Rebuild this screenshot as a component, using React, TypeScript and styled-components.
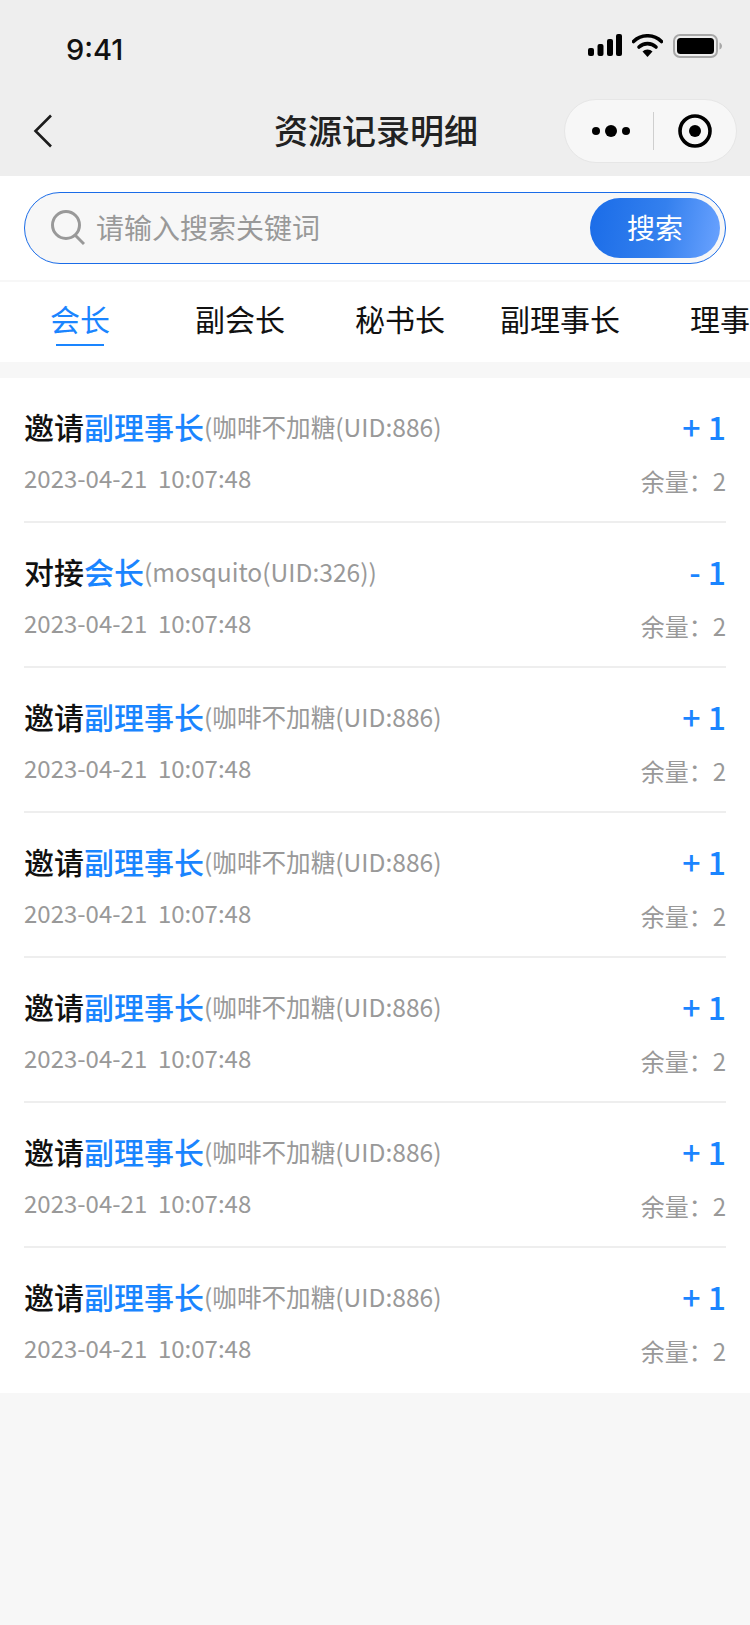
import React from "react";
import styled, { createGlobalStyle } from "styled-components";

const GlobalStyle = createGlobalStyle`
  html, body {
    margin: 0;
    padding: 0;
    background: #f7f7f7;
    font-family: "Noto Sans CJK SC", "Noto Sans", sans-serif;
  }
  * {
    box-sizing: border-box;
  }
`;

const Page = styled.div`
  width: 750px;
  height: 1625px;
  overflow: hidden;
  background: #f7f7f7;
`;

const Header = styled.header`
  height: 176px;
  background: #eeeeee;
`;

const StatusBar = styled.div`
  height: 88px;
  display: flex;
  justify-content: space-between;
  padding: 28px 28px 0 66px;
`;

const Time = styled.span`
  font-family: Inter, "Liberation Sans", sans-serif;
  font-size: 29px;
  line-height: 44px;
  font-weight: 500;
  color: #111;
`;

const StatusIcons = styled.div`
  display: flex;
  align-items: flex-start;
  gap: 10px;
  padding-top: 6px;
`;

const NavBar = styled.div`
  height: 88px;
  display: grid;
  grid-template-columns: 1fr auto 1fr;
  align-items: center;
  padding: 0 13px;
`;

const BackIcon = styled.svg`
  display: block;
  margin: -2px 0 0 20px;
`;

const Title = styled.h1`
  margin: 0 0 0 2px;
  font-size: 34px;
  line-height: 44px;
  font-weight: 500;
  color: #222;
  transform: translateY(-2px);
`;

const Capsule = styled.div`
  justify-self: end;
  width: 173px;
  height: 64px;
  margin-top: -3px;
  border-radius: 32px;
  border: 1px solid #e6e6e6;
  background: #f7f7f7;
  display: flex;
  align-items: center;
`;

const CapsuleSlot = styled.div<{ $nudge?: number }>`
  flex: 1;
  display: flex;
  align-items: center;
  justify-content: center;
  padding-left: ${(p) => p.$nudge ?? 0}px;
`;

const CapsuleLine = styled.div`
  width: 1px;
  height: 38px;
  background: #cfcfcf;
`;

const SearchSection = styled.div`
  height: 106px;
  padding: 16px 24px 0;
  background: #fff;
  border-bottom: 2px solid #f7f7f7;
`;

const SearchBox = styled.div`
  height: 72px;
  display: flex;
  align-items: center;
  padding: 0 5px 0 26px;
  border: 1px solid #1a6ce8;
  border-radius: 36px;
  background: #f7f7f7;
`;

const SearchGlass = styled.svg`
  flex: none;
`;

const Placeholder = styled.span`
  flex: 1;
  margin: -2px 0 0 11px;
  font-size: 28px;
  line-height: 40px;
  color: #999;
`;

const SearchButton = styled.button`
  width: 130px;
  height: 60px;
  padding: 0 0 2px;
  border: none;
  border-radius: 30px;
  background: linear-gradient(100deg, #1a6ce8 0%, #3480ee 55%, #6ba3ff 100%);
  color: #fff;
  font-family: inherit;
  font-size: 28px;
  line-height: 40px;
`;

const Tabs = styled.nav`
  height: 80px;
  display: flex;
  background: #fff;
`;

const Tab = styled.div<{ $active?: boolean }>`
  flex: none;
  width: 160px;
  height: 80px;
  display: flex;
  flex-direction: column;
  align-items: center;
  padding-top: 16px;
  font-size: 30px;
  line-height: 40px;
  color: ${(p) => (p.$active ? "#1a85ff" : "#111")};

  &::after {
    content: "";
    width: 48px;
    height: 2px;
    margin-top: 6px;
    background: ${(p) => (p.$active ? "#1a85ff" : "transparent")};
  }
`;

const List = styled.ul`
  list-style: none;
  margin: 16px 0 0;
  padding: 0 24px;
  background: #fff;
`;

const Row = styled.li`
  height: 145px;
  display: flex;
  justify-content: space-between;
  padding-top: 26px;
  border-bottom: 2px solid #eeeeee;

  &:last-child {
    border-bottom: none;
  }
`;

const RowMain = styled.div`
  display: flex;
  flex-direction: column;
  gap: 10px;
`;

const RowSide = styled.div`
  display: flex;
  flex-direction: column;
  align-items: flex-end;
  gap: 13px;
`;

const RowTitle = styled.div`
  display: flex;
  align-items: center;
  height: 44px;
  font-size: 30px;
  line-height: 44px;
  font-weight: 500;
  color: #111;
`;

const Role = styled.span`
  color: #1a85ff;
`;

const Who = styled.span`
  font-size: 24.6px;
  font-weight: 400;
  color: #999;
`;

const Muted = styled.span`
  font-size: 24px;
  line-height: 40px;
  color: #999;
  white-space: pre;
`;

const Amount = styled.span`
  height: 44px;
  font-size: 32px;
  line-height: 44px;
  font-weight: 500;
  color: #1a85ff;
  white-space: pre;
`;

type Record = {
  action: string;
  role: string;
  who: string;
  amount: string;
};

const invite: Record = {
  action: "邀请",
  role: "副理事长",
  who: "(咖啡不加糖(UID:886)",
  amount: "+ 1",
};

const records: Record[] = [
  invite,
  { action: "对接", role: "会长", who: "(mosquito(UID:326))", amount: "- 1" },
  invite,
  invite,
  invite,
  invite,
  invite,
];

const tabs = ["会长", "副会长", "秘书长", "副理事长", "理事"];

const App = () => {
  return (
    <Page>
      <GlobalStyle />
      <Header>
        <StatusBar>
          <Time>9:41</Time>
          <StatusIcons>
            <svg width="34" height="22" viewBox="0 0 34 22">
              <rect x="0" y="14" width="6" height="8" rx="2" fill="#000" />
              <rect x="9.500" y="10" width="6" height="12" rx="2" fill="#000" />
              <rect x="19" y="5" width="6" height="17" rx="2" fill="#000" />
              <rect x="28" y="0" width="6" height="22" rx="2" fill="#000" />
            </svg>
            <svg width="31" height="23" viewBox="0 0 31 23">
              <path d="M1.500 7.500a20 20 0 0 1 28 0" fill="none" stroke="#000" strokeWidth="3.600" strokeLinecap="round" />
              <path d="M7 13a12.500 12.500 0 0 1 17 0" fill="none" stroke="#000" strokeWidth="3.600" strokeLinecap="round" />
              <path d="M10.500 17.500a7 7 0 0 1 10 0L15.500 23z" fill="#000" />
            </svg>
            <svg width="49" height="24" viewBox="0 0 49 24">
              <rect x="1" y="1" width="43" height="22" rx="6" fill="none" stroke="#a8a8a8" strokeWidth="2" />
              <rect x="4" y="4" width="37" height="16" rx="3.500" fill="#000" />
              <path d="M46.500 8.500c1.500.5 2.500 2 2.500 3.500s-1 3-2.500 3.500z" fill="#a8a8a8" />
            </svg>
          </StatusIcons>
        </StatusBar>
        <NavBar>
          <BackIcon width="20" height="34" viewBox="0 0 20 34">
            <path d="M18 1.500 2.500 17 18 32.500" fill="none" stroke="#1c1c1c" strokeWidth="2.600" />
          </BackIcon>
          <Title>资源记录明细</Title>
          <Capsule>
            <CapsuleSlot $nudge={5}>
              <svg width="38" height="14" viewBox="0 0 38 14">
                <circle cx="4" cy="7" r="4" fill="#000" />
                <circle cx="19" cy="7" r="6" fill="#000" />
                <circle cx="34" cy="7" r="4" fill="#000" />
              </svg>
            </CapsuleSlot>
            <CapsuleLine />
            <CapsuleSlot>
              <svg width="34" height="34" viewBox="0 0 34 34">
                <circle cx="17" cy="17" r="15" fill="none" stroke="#000" strokeWidth="3.600" />
                <circle cx="17" cy="17" r="6" fill="#000" />
              </svg>
            </CapsuleSlot>
          </Capsule>
        </NavBar>
      </Header>
      <SearchSection>
        <SearchBox>
          <SearchGlass width="34" height="36" viewBox="0 0 34 36">
            <circle cx="15" cy="15" r="13.500" fill="none" stroke="#999" strokeWidth="3" />
            <path d="M24.500 25.500 33 34" fill="none" stroke="#999" strokeWidth="3" />
          </SearchGlass>
          <Placeholder>请输入搜索关键词</Placeholder>
          <SearchButton>搜索</SearchButton>
        </SearchBox>
      </SearchSection>
      <Tabs>
        {tabs.map((tab, i) => (
          <Tab key={tab} $active={i === 0}>
            {tab}
          </Tab>
        ))}
      </Tabs>
      <List>
        {records.map((r, i) => (
          <Row key={i}>
            <RowMain>
              <RowTitle>
                {r.action}
                <Role>{r.role}</Role>
                <Who>{r.who}</Who>
              </RowTitle>
              <Muted>2023-04-21  10:07:48</Muted>
            </RowMain>
            <RowSide>
              <Amount>{r.amount}</Amount>
              <Muted>余量：2</Muted>
            </RowSide>
          </Row>
        ))}
      </List>
    </Page>
  );
};

export default App;
